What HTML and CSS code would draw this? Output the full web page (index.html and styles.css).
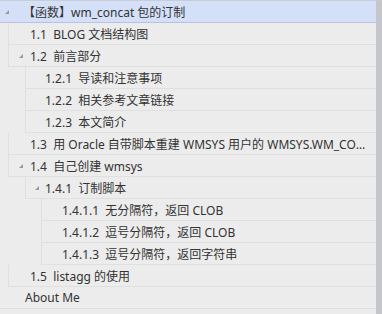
FILE: index.html
```html
<!DOCTYPE html>
<html lang="zh-CN">
<head>
  <meta charset="UTF-8" />
  <title>目录</title>
  <link rel="stylesheet" href="styles.css">
</head>
<body>
  <div class="toc-panel">
    <ul class="toc">
      <li class="node lvl-0 selected open">
        <div class="row"><span class="tog"></span><span class="label">【函数】wm_concat 包的订制</span></div>
        <ul>
          <li class="node lvl-1"><div class="row"><span class="label">1.1&nbsp; BLOG 文档结构图</span></div></li>
          <li class="node lvl-1 open">
            <div class="row"><span class="tog"></span><span class="label">1.2&nbsp; 前言部分</span></div>
            <ul>
              <li class="node lvl-2"><div class="row"><span class="label">1.2.1&nbsp; 导读和注意事项</span></div></li>
              <li class="node lvl-2"><div class="row"><span class="label">1.2.2&nbsp; 相关参考文章链接</span></div></li>
              <li class="node lvl-2"><div class="row"><span class="label">1.2.3&nbsp; 本文简介</span></div></li>
            </ul>
          </li>
          <li class="node lvl-1"><div class="row"><span class="label">1.3&nbsp; 用 Oracle 自带脚本重建 WMSYS 用户的 WMSYS.WM_CONCAT 函数</span></div></li>
          <li class="node lvl-1 open">
            <div class="row"><span class="tog"></span><span class="label">1.4&nbsp; 自己创建 wmsys</span></div>
            <ul>
              <li class="node lvl-2 open">
                <div class="row"><span class="tog"></span><span class="label">1.4.1&nbsp; 订制脚本</span></div>
                <ul>
                  <li class="node lvl-3"><div class="row"><span class="label">1.4.1.1&nbsp; 无分隔符，返回 CLOB</span></div></li>
                  <li class="node lvl-3"><div class="row"><span class="label">1.4.1.2&nbsp; 逗号分隔符，返回 CLOB</span></div></li>
                  <li class="node lvl-3"><div class="row"><span class="label">1.4.1.3&nbsp; 逗号分隔符，返回字符串</span></div></li>
                </ul>
              </li>
            </ul>
          </li>
          <li class="node lvl-1"><div class="row"><span class="label">1.5&nbsp; listagg 的使用</span></div></li>
        </ul>
      </li>
      <li class="node lvl-0 plain"><div class="row"><span class="label">About Me</span></div></li>
    </ul>
  </div>
</body>
</html>
```

FILE: styles.css
```css
body {
  margin: 0;
  background: #ececec;
  font-family: "Noto Sans", "Noto Sans CJK SC", sans-serif;
  font-size: 12px;
  color: #333;
}
.toc-panel {
  display: flex;
  height: 314px;
  border-top: 1px solid #c9ccd3;
  box-sizing: border-box;
  border-right: 6px solid #c4c6cb;
  overflow: hidden;
}
.toc,
.toc ul {
  list-style: none;
  margin: 0;
  padding: 0;
}
.toc {
  flex: 1;
  min-width: 0;
}
.row {
  display: flex;
  align-items: center;
  height: 22px;
  box-sizing: border-box;
  border-bottom: 1px solid #e0e0e0;
  border-left: 1px solid #e0e0e0;
  padding-right: 8px;
  white-space: nowrap;
}
.label {
  overflow: hidden;
  text-overflow: ellipsis;
  min-width: 0;
}
/* indentation per level */
.lvl-0 > .row { padding-left: 23px; border-left: none; }
.lvl-1 > .row { margin-left: 8px; padding-left: 21px; }
.lvl-2 > .row { margin-left: 25px; padding-left: 19px; }
.lvl-3 > .row { margin-left: 41px; padding-left: 20px; }
.plain > .row { padding-left: 25px; }
.selected > .row {
  background: #d4e0f8;
  border-bottom: 1px solid #b9c4dc;
}
.row .tog {
  width: 0;
  position: relative;
}
.row .tog::before {
  content: "";
  position: absolute;
  left: -18px;
  top: -2px;
  border-style: solid;
  border-width: 0 0 4px 4px;
  border-color: transparent transparent #999 transparent;
}
.lvl-1 > .row .tog::before { left: -11px; }
.lvl-2 > .row .tog::before { left: -10px; }
```
